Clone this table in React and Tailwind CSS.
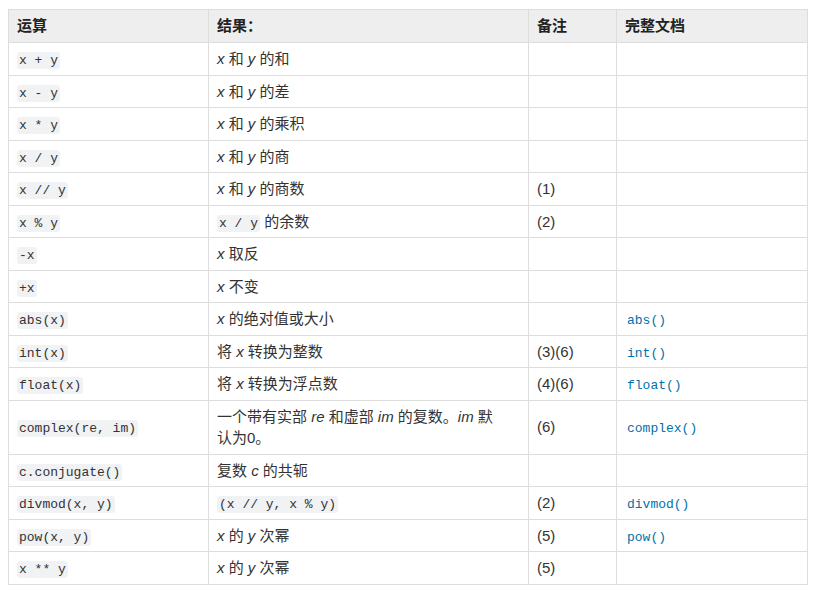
import React from "react";

const C = ({ children }) => (
    <code className="font-['Liberation_Mono',monospace] text-[13px] leading-none bg-[#f0f2f4] rounded-[3px] px-[2px] py-[1px]">
        {children}
    </code>
);

const L = ({ children }) => (
    <code className="font-['Liberation_Mono',monospace] text-[13px] leading-none text-[#0072aa] px-[2px]">
        {children}
    </code>
);

const V = ({ children }) => <i>{children}</i>;

const rows = [
    [<C>x + y</C>, <><V>x</V> 和 <V>y</V> 的和</>, "", null],
    [<C>x - y</C>, <><V>x</V> 和 <V>y</V> 的差</>, "", null],
    [<C>x * y</C>, <><V>x</V> 和 <V>y</V> 的乘积</>, "", null],
    [<C>x / y</C>, <><V>x</V> 和 <V>y</V> 的商</>, "", null],
    [<C>x // y</C>, <><V>x</V> 和 <V>y</V> 的商数</>, "(1)", null],
    [<C>x % y</C>, <><C>x / y</C> 的余数</>, "(2)", null],
    [<C>-x</C>, <><V>x</V> 取反</>, "", null],
    [<C>+x</C>, <><V>x</V> 不变</>, "", null],
    [<C>abs(x)</C>, <><V>x</V> 的绝对值或大小</>, "", "abs()"],
    [<C>int(x)</C>, <>将 <V>x</V> 转换为整数</>, "(3)(6)", "int()"],
    [<C>float(x)</C>, <>将 <V>x</V> 转换为浮点数</>, "(4)(6)", "float()"],
    [
        <C>complex(re, im)</C>,
        <>
            一个带有实部 <V>re</V> 和虚部 <V>im</V> 的复数。<V>im</V> 默
            <br />
            认为0。
        </>,
        "(6)",
        "complex()",
    ],
    [<C>c.conjugate()</C>, <>复数 <V>c</V> 的共轭</>, "", null],
    [<C>divmod(x, y)</C>, <C>(x // y, x % y)</C>, "(2)", "divmod()"],
    [<C>pow(x, y)</C>, <><V>x</V> 的 <V>y</V> 次幂</>, "(5)", "pow()"],
    [<C>x ** y</C>, <><V>x</V> 的 <V>y</V> 次幂</>, "(5)", null],
];

const cell = "border border-[#dddddd] px-[8px] py-[5px] leading-[21.5px] align-middle";

const App = () => {
    return (
        <div className="min-h-screen bg-white pt-[9px] pl-[8px] font-['Liberation_Sans','Noto_Sans_CJK_SC',sans-serif] text-[15px] text-[#333]">
            <table className="table-fixed border-collapse w-[799px]">
                <colgroup>
                    <col className="w-[200px]" />
                    <col className="w-[320px]" />
                    <col className="w-[88px]" />
                    <col className="w-[191px]" />
                </colgroup>
                <thead>
                    <tr className="bg-[#eeeeee] text-[#222]">
                        {["运算", "结果：", "备注", "完整文档"].map((h) => (
                            <th
                                key={h}
                                className="border border-[#dddddd] px-[8px] py-[5px] text-left font-bold leading-[22px]"
                            >
                                {h}
                            </th>
                        ))}
                    </tr>
                </thead>
                <tbody>
                    {rows.map((r, i) => (
                        <tr key={i}>
                            <td className={cell}>{r[0]}</td>
                            <td className={cell}>{r[1]}</td>
                            <td className={cell}>{r[2]}</td>
                            <td className={cell}>{r[3] && <L>{r[3]}</L>}</td>
                        </tr>
                    ))}
                </tbody>
            </table>
        </div>
    );
};

export default App;
